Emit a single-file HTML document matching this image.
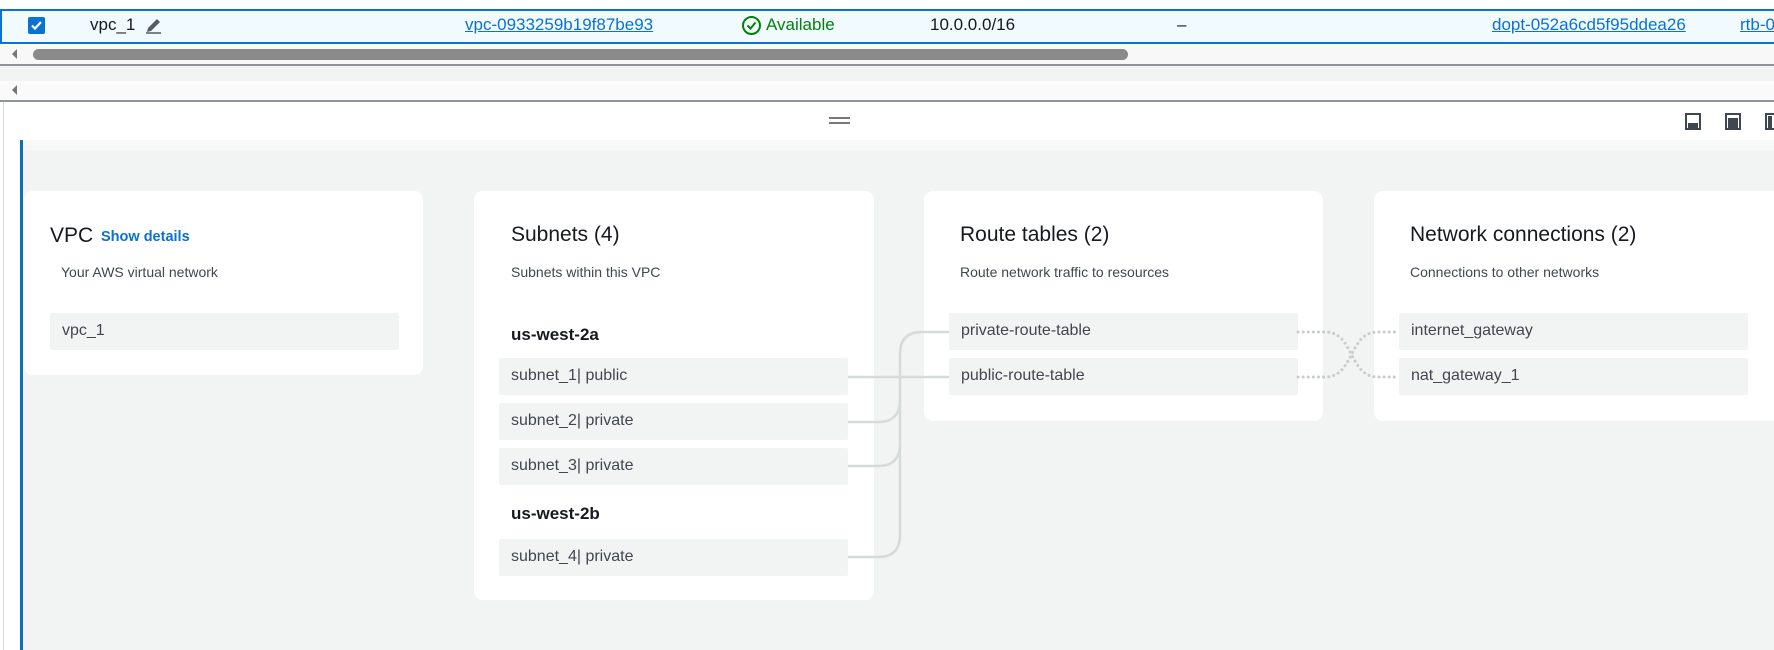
<!DOCTYPE html>
<html><head><meta charset="utf-8"><style>
*{box-sizing:border-box;margin:0;padding:0}
body{width:1774px;height:650px;overflow:hidden;background:#fff;font-family:"Liberation Sans",Arial,sans-serif;color:#16191f;position:relative}
.a{position:absolute}
.row{left:0;top:9px;width:1774px;height:35px;background:#f1faff;border-top:2px solid #0972d3;border-bottom:2px solid #0972d3;border-left:2px solid #0972d3}
.t{font-size:17px;line-height:20px;white-space:nowrap}
.lk{color:#0972d3;text-decoration:underline}
.card{background:#fff;border-radius:9px}
.h{font-size:21px;line-height:24px;white-space:nowrap}
.s{font-size:14px;color:#414750;white-space:nowrap}
.it{background:#f2f3f3;border-radius:2px;font-size:16px;color:#414750;padding-left:12px;line-height:36px;white-space:nowrap}
.b{font-weight:bold;font-size:17px;white-space:nowrap}
</style></head><body>
<div class="a row"></div>
<div class="a" style="left:28px;top:17px;width:17px;height:17px;background:#0972d3;border-radius:2px"><svg width="17" height="17"><path d="M4 8.5l3 3 6-6.5" stroke="#fff" stroke-width="2.2" fill="none"/></svg></div>
<div class="a t" style="left:90px;top:15px">vpc_1</div>
<svg class="a" style="left:144px;top:15px" width="20" height="20"><path d="M3 17l1-4 9-9 3 3-9 9z" fill="#545b64"/><path d="M2 18h15" stroke="#545b64" stroke-width="1.5"/></svg>
<div class="a t lk" style="left:465px;top:15px">vpc-0933259b19f87be93</div>
<svg class="a" style="left:741px;top:15px" width="21" height="21"><circle cx="10.5" cy="10.5" r="8.5" stroke="#037f0c" stroke-width="2" fill="none"/><path d="M6.5 10.5l3 3 5-6" stroke="#037f0c" stroke-width="2" fill="none"/></svg>
<div class="a t" style="left:766px;top:15px;color:#037f0c">Available</div>
<div class="a t" style="left:930px;top:15px">10.0.0.0/16</div>
<div class="a t" style="left:1177px;top:15px">–</div>
<div class="a t lk" style="left:1492px;top:15px">dopt-052a6cd5f95ddea26</div>
<div class="a t lk" style="left:1740px;top:15px">rtb-0</div>
<!-- scrollbar -->
<div class="a" style="left:0;top:45px;width:1774px;height:19px;background:#f8f8f8"></div>
<svg class="a" style="left:10px;top:48px" width="10" height="12"><path d="M7 1L2 6l5 5z" fill="#777"/></svg>
<div class="a" style="left:33px;top:49px;width:1095px;height:11px;background:#8a8a8a;border-radius:6px"></div>
<div class="a" style="left:0;top:64px;width:1774px;height:2px;background:#8d9399"></div>
<div class="a" style="left:0;top:66px;width:1774px;height:15px;background:#f2f3f3"></div>
<div class="a" style="left:0;top:81px;width:1774px;height:19px;background:#fafafa"></div>
<svg class="a" style="left:10px;top:84px" width="10" height="12"><path d="M7 1L2 6l5 5z" fill="#777"/></svg>
<div class="a" style="left:0;top:100px;width:1774px;height:2px;background:#8d9399"></div>
<div class="a" style="left:3px;top:102px;width:1px;height:548px;background:#d5dbdb"></div>
<div class="a" style="left:829px;top:117px;width:21px;height:2px;background:#777"></div>
<div class="a" style="left:829px;top:122px;width:21px;height:2px;background:#777"></div>
<svg class="a" style="left:1685px;top:113px" width="90" height="18">
<rect x="1" y="1" width="14" height="15" fill="none" stroke="#414750" stroke-width="2"/><rect x="3" y="10" width="10" height="5" fill="#414750"/>
<rect x="41" y="1" width="14" height="15" fill="none" stroke="#414750" stroke-width="2"/><rect x="43" y="5" width="10" height="10" fill="#414750"/>
<rect x="81" y="1" width="14" height="15" fill="none" stroke="#414750" stroke-width="2"/><rect x="83" y="3" width="4" height="12" fill="#414750"/>
</svg>
<!-- canvas -->
<div class="a" style="left:22px;top:140px;width:1752px;height:510px;background:#f2f3f3"></div>
<div class="a" style="left:22px;top:140px;width:1752px;height:10px;background:#f7f8f8"></div>
<div class="a" style="left:20px;top:140px;width:3px;height:510px;background:#0f6fb5"></div>
<!-- VPC card -->
<div class="a card" style="left:24px;top:191px;width:399px;height:184px"></div>
<div class="a h" style="left:50px;top:224px">VPC</div>
<div class="a" style="left:101px;top:229px;font-size:14.5px;font-weight:bold;color:#0972d3">Show details</div>
<div class="a s" style="left:61px;top:264px">Your AWS virtual network</div>
<div class="a it" style="left:50px;top:313px;width:349px;height:37px">vpc_1</div>
<!-- Subnets -->
<div class="a card" style="left:474px;top:191px;width:400px;height:409px"></div>
<div class="a h" style="left:511px;top:223px">Subnets (4)</div>
<div class="a s" style="left:511px;top:264px">Subnets within this VPC</div>
<div class="a b" style="left:511px;top:325px">us-west-2a</div>
<div class="a it" style="left:499px;top:358px;width:349px;height:37px">subnet_1| public</div>
<div class="a it" style="left:499px;top:403px;width:349px;height:37px">subnet_2| private</div>
<div class="a it" style="left:499px;top:448px;width:349px;height:37px">subnet_3| private</div>
<div class="a b" style="left:511px;top:504px">us-west-2b</div>
<div class="a it" style="left:499px;top:539px;width:349px;height:37px">subnet_4| private</div>
<!-- Route tables -->
<div class="a card" style="left:924px;top:191px;width:399px;height:230px"></div>
<div class="a h" style="left:960px;top:223px">Route tables (2)</div>
<div class="a s" style="left:960px;top:264px">Route network traffic to resources</div>
<div class="a it" style="left:949px;top:313px;width:349px;height:37px">private-route-table</div>
<div class="a it" style="left:949px;top:358px;width:349px;height:37px">public-route-table</div>
<!-- Network -->
<div class="a card" style="left:1374px;top:191px;width:420px;height:230px"></div>
<div class="a h" style="left:1410px;top:223px">Network connections (2)</div>
<div class="a s" style="left:1410px;top:264px">Connections to other networks</div>
<div class="a it" style="left:1399px;top:313px;width:349px;height:37px">internet_gateway</div>
<div class="a it" style="left:1399px;top:358px;width:349px;height:37px">nat_gateway_1</div>
<!-- connectors -->
<svg class="a" style="left:0;top:0" width="1774" height="650">
<g stroke="#d5dbdb" stroke-width="2.5" fill="none">
<path d="M848 377H949"/>
<path d="M949 332H922Q900 332 900 354V535Q900 557 878 557H848"/>
<path d="M848 422H878Q900 422 900 400"/>
<path d="M848 466H878Q900 466 900 444"/>
</g>
<g stroke="#c9cdcd" stroke-width="3" fill="none" stroke-dasharray="0.1 5" stroke-linecap="round">
<path d="M1298 332H1325C1355 332 1348 377 1378 377H1399"/>
<path d="M1298 377H1325C1355 377 1348 332 1378 332H1399"/>
</g>
</svg>
</body></html>
